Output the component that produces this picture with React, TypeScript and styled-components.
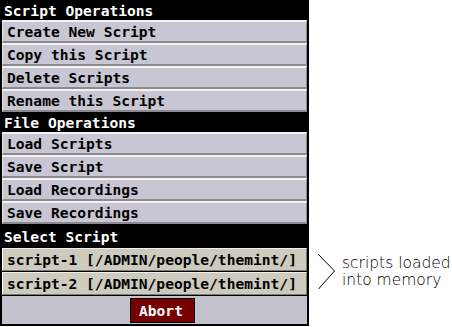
import React from "react";
import styled, { createGlobalStyle } from "styled-components";

const Global = createGlobalStyle`
  html, body { margin: 0; padding: 0; background: #ffffff; }
  #root { width: 452px; height: 327px; }
`;

const mono = `"DejaVu Sans Mono", "Liberation Mono", monospace`;

const Page = styled.div`
  display: flex;
  align-items: flex-start;
  width: 452px;
  height: 327px;
  background: #ffffff;
`;

const Panel = styled.div`
  width: 309px;
  box-sizing: border-box;
  background: #000;
  padding: 0 2px 2px 2px;
  display: flex;
  flex-direction: column;
`;

const Header = styled.div<{ $h: number }>`
  height: ${(p) => p.$h}px;
  display: flex;
  align-items: center;
  padding-left: 2px;
  color: #ffffff;
  font-family: ${mono};
  font-weight: bold;
  font-size: 14.6px;
  white-space: pre;
`;

const Btn = styled.div`
  height: 23px;
  box-sizing: border-box;
  display: flex;
  align-items: center;
  padding-left: 4px;
  border-top: 2px solid #f2f2f2;
  border-left: 1px solid #e6e6e6;
  border-right: 1px solid #8a8a8a;
  border-bottom: 2px solid #8c8a90;
  background: #c8c6d2;
  color: #000;
  font-family: ${mono};
  font-weight: bold;
  font-size: 14.6px;
  white-space: pre;
`;

const ScriptList = styled.div`
  display: flex;
  flex-direction: column;
  gap: 1px;
  padding-bottom: 1px;
`;

const ScriptBtn = styled(Btn)`
  border-top: 1px solid #eeeeee;
  border-left: 1px solid #ffffff;
  border-bottom: 1px solid #7a7a7a;
  border-right: 1px solid #7a7a7a;
  background: #cdcabe;
`;

const AbortArea = styled.div`
  height: 28px;
  box-sizing: border-box;
  display: flex;
  align-items: center;
  padding-left: 128px;
  background: #c4c3cd;
`;

const AbortBtn = styled.div`
  width: 65px;
  height: 25px;
  box-sizing: border-box;
  border: 1px solid #000;
  background: #760000;
  display: flex;
  align-items: center;
  padding-left: 8px;
  color: #ffffff;
  font-family: ${mono};
  font-weight: bold;
  font-size: 14.6px;
`;

const Note = styled.div`
  display: flex;
  align-items: flex-start;
  gap: 5px;
  padding: 253px 0 0 8px;
`;

const NoteText = styled.div`
  padding-top: 2px;
  font-family: "DejaVu Sans", "Liberation Sans", sans-serif;
  font-weight: 200;
  font-size: 15.5px;
  line-height: 17px;
  color: #000;
  white-space: pre;
`;

const scriptOps = ["Create New Script", "Copy this Script", "Delete Scripts", "Rename this Script"];
const fileOps = ["Load Scripts", "Save Script", "Load Recordings", "Save Recordings"];
const scripts = ["script-1 [/ADMIN/people/themint/]", "script-2 [/ADMIN/people/themint/]"];

export default function App() {
  return (
    <Page>
      <Global />
      <Panel>
        <Header $h={20}>Script Operations</Header>
        {scriptOps.map((t) => (
          <Btn key={t}>{t}</Btn>
        ))}
        <Header $h={20}>File Operations</Header>
        {fileOps.map((t) => (
          <Btn key={t}>{t}</Btn>
        ))}
        <Header $h={24}>Select Script</Header>
        <ScriptList>
          {scripts.map((t) => (
            <ScriptBtn key={t}>{t}</ScriptBtn>
          ))}
        </ScriptList>
        <AbortArea>
          <AbortBtn>Abort</AbortBtn>
        </AbortArea>
      </Panel>
      <Note>
        <svg width="20" height="38" viewBox="0 0 20 38">
          <polyline points="1,1 17.5,18 1.5,36" fill="none" stroke="#000" strokeWidth="1" />
        </svg>
        <NoteText>{"scripts loaded\ninto memory"}</NoteText>
      </Note>
    </Page>
  );
}
